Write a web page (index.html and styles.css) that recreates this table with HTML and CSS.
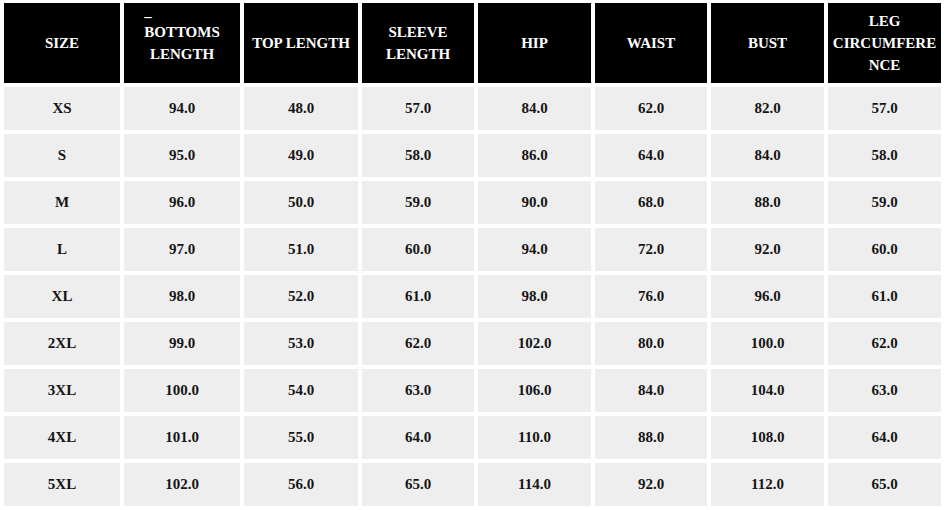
FILE: index.html
```html
<!DOCTYPE html>
<html>
<head>
<meta charset="utf-8">
<link rel="stylesheet" href="styles.css">
</head>
<body>
<div class="chart">
  <div class="hd">SIZE</div>
  <div class="hd"><div class="stack"><div class="dash">_</div>BOTTOMS<br>LENGTH</div></div>
  <div class="hd">TOP LENGTH</div>
  <div class="hd">SLEEVE LENGTH</div>
  <div class="hd">HIP</div>
  <div class="hd">WAIST</div>
  <div class="hd">BUST</div>
  <div class="hd brk">LEG CIRCUMFERENCE</div>

  <div class="cell">XS</div><div class="cell">94.0</div><div class="cell">48.0</div><div class="cell">57.0</div><div class="cell">84.0</div><div class="cell">62.0</div><div class="cell">82.0</div><div class="cell">57.0</div>
  <div class="cell">S</div><div class="cell">95.0</div><div class="cell">49.0</div><div class="cell">58.0</div><div class="cell">86.0</div><div class="cell">64.0</div><div class="cell">84.0</div><div class="cell">58.0</div>
  <div class="cell">M</div><div class="cell">96.0</div><div class="cell">50.0</div><div class="cell">59.0</div><div class="cell">90.0</div><div class="cell">68.0</div><div class="cell">88.0</div><div class="cell">59.0</div>
  <div class="cell">L</div><div class="cell">97.0</div><div class="cell">51.0</div><div class="cell">60.0</div><div class="cell">94.0</div><div class="cell">72.0</div><div class="cell">92.0</div><div class="cell">60.0</div>
  <div class="cell">XL</div><div class="cell">98.0</div><div class="cell">52.0</div><div class="cell">61.0</div><div class="cell">98.0</div><div class="cell">76.0</div><div class="cell">96.0</div><div class="cell">61.0</div>
  <div class="cell">2XL</div><div class="cell">99.0</div><div class="cell">53.0</div><div class="cell">62.0</div><div class="cell">102.0</div><div class="cell">80.0</div><div class="cell">100.0</div><div class="cell">62.0</div>
  <div class="cell">3XL</div><div class="cell">100.0</div><div class="cell">54.0</div><div class="cell">63.0</div><div class="cell">106.0</div><div class="cell">84.0</div><div class="cell">104.0</div><div class="cell">63.0</div>
  <div class="cell">4XL</div><div class="cell">101.0</div><div class="cell">55.0</div><div class="cell">64.0</div><div class="cell">110.0</div><div class="cell">88.0</div><div class="cell">108.0</div><div class="cell">64.0</div>
  <div class="cell">5XL</div><div class="cell">102.0</div><div class="cell">56.0</div><div class="cell">65.0</div><div class="cell">114.0</div><div class="cell">92.0</div><div class="cell">112.0</div><div class="cell">65.0</div>
</div>
</body>
</html>
```
FILE: styles.css
```css
html, body {
  margin: 0;
  padding: 0;
  background: #ffffff;
}
body {
  font-family: "Liberation Serif", "Times New Roman", serif;
  font-weight: bold;
  font-size: 15px;
}
.chart {
  display: grid;
  grid-template-columns: 116px 116px 114px 112px 113px 112px 113px 113px;
  grid-template-rows: 80px repeat(9, 43px);
  column-gap: 4px;
  row-gap: 4px;
  padding: 3px 0 0 4px;
}
.hd {
  background: #000000;
  color: #ffffff;
  display: flex;
  align-items: center;
  justify-content: center;
  text-align: center;
  line-height: 22px;
  padding: 0 4px;
}
.brk {
  overflow-wrap: anywhere;
  min-width: 0;
}
.stack {
  display: inline-block;
  text-align: center;
}
.dash {
  text-align: left;
  height: 16px;
  margin-top: -16px;
  line-height: 12px;
}
.cell {
  background: #eeeeee;
  color: #151515;
  display: flex;
  align-items: center;
  justify-content: center;
}
```
